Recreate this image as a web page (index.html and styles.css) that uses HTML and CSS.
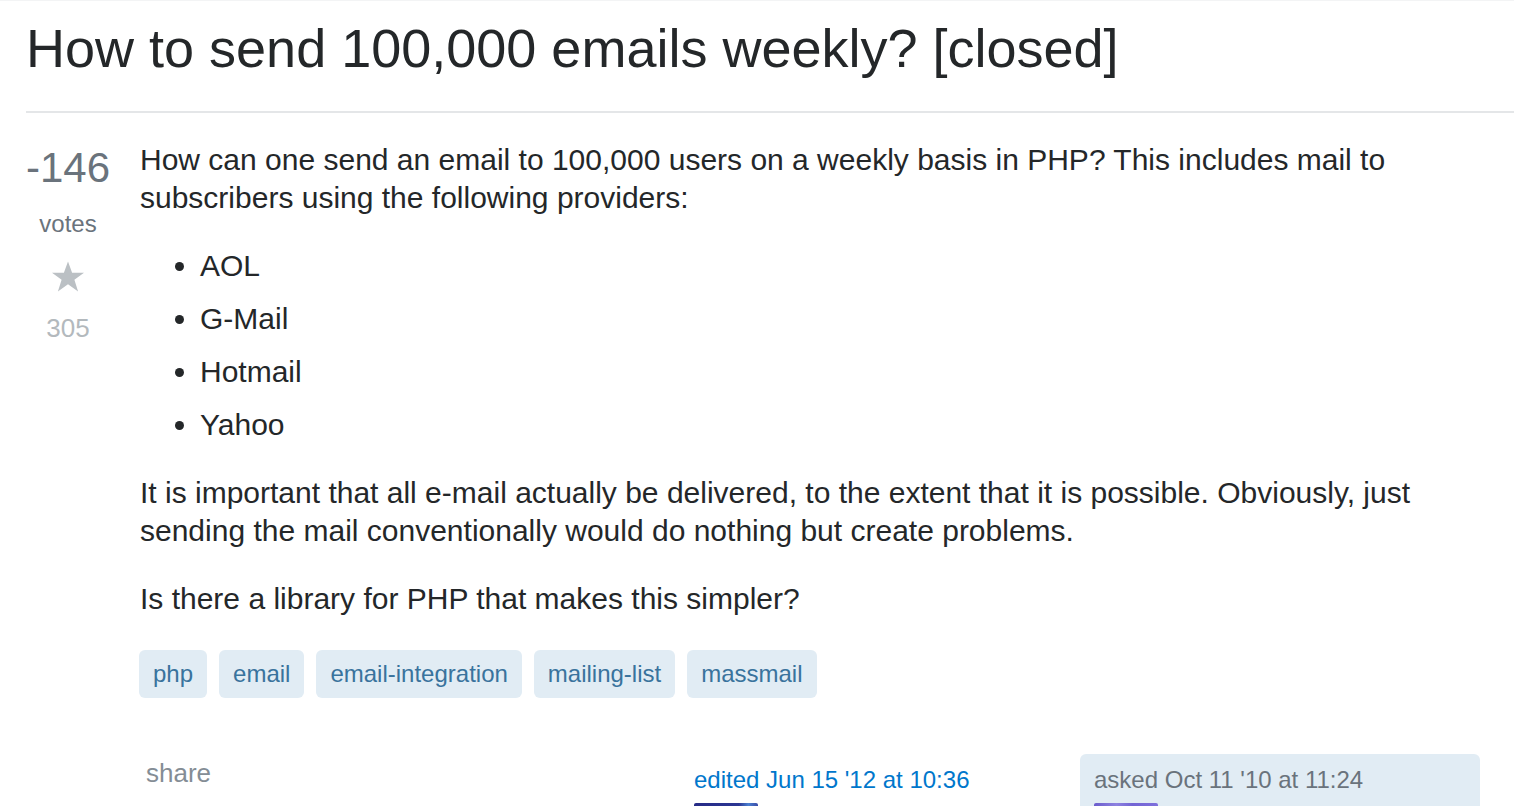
FILE: index.html
```html
<!DOCTYPE html>
<html>
<head>
<meta charset="utf-8">
<link rel="stylesheet" href="styles.css">
</head>
<body>
<div class="page">
  <div class="question-header">
    <h1 class="title">How to send 100,000 emails weekly? [closed]</h1>
  </div>
  <div class="question">
    <div class="votecell">
      <div class="vote-count">-146</div>
      <div class="vote-label">votes</div>
      <svg class="star" viewBox="0 0 34 34" width="34" height="34"><path d="M17 1.5l4.1 11.3H33l-9.6 7 3.7 11.6L17 24.3 6.9 31.4l3.7-11.6-9.6-7h11.9z" fill="#bbc0c4"/></svg>
      <div class="fav-count">305</div>
    </div>
    <div class="postcell">
      <div class="post-text">
        <p>How can one send an email to 100,000 users on a weekly basis in PHP? This includes mail to subscribers using the following providers:</p>
        <ul>
          <li>AOL</li>
          <li>G-Mail</li>
          <li>Hotmail</li>
          <li>Yahoo</li>
        </ul>
        <p>It is important that all e-mail actually be delivered, to the extent that it is possible. Obviously, just sending the mail conventionally would do nothing but create problems.</p>
        <p>Is there a library for PHP that makes this simpler?</p>
      </div>
      <div class="taglist">
        <a class="tag">php</a>
        <a class="tag">email</a>
        <a class="tag">email-integration</a>
        <a class="tag">mailing-list</a>
        <a class="tag">massmail</a>
      </div>
      <div class="post-footer">
        <div class="post-menu"><a class="share">share</a></div>
        <div class="signatures">
          <div class="sig">
            <a class="action-time edited">edited Jun 15 '12 at 10:36</a>
            <div class="avatar avatar-editor"></div>
          </div>
          <div class="sig owner">
            <div class="action-time">asked Oct 11 '10 at 11:24</div>
            <div class="avatar avatar-owner"></div>
          </div>
        </div>
      </div>
    </div>
  </div>
</div>
</body>
</html>
```

FILE: styles.css
```css
html, body {
  margin: 0;
  padding: 0;
  background: #ffffff;
}

body {
  font-family: "Liberation Sans", Arial, sans-serif;
  color: #242729;
  border-top: 1px solid #f3f4f5;
  overflow: hidden;
}

.page {
  padding-left: 26px;
}

.question-header {
  border-bottom: 2px solid #e4e6e8;
  padding-top: 11px;
  padding-bottom: 26px;
}

.title {
  margin: 0;
  font-size: 54px;
  font-weight: normal;
  line-height: 73px;
  color: #242729;
}

.question {
  display: flex;
  padding-top: 28px;
}

.votecell {
  width: 86px;
  flex: none;
  margin-left: -1px;
  display: flex;
  flex-direction: column;
  align-items: center;
  padding-top: 6px;
}

.vote-count {
  font-size: 42px;
  line-height: 42px;
  color: #6a737c;
}

.vote-label {
  font-size: 24px;
  line-height: 30px;
  color: #6a737c;
  margin-top: 20px;
}

.star {
  display: block;
  margin-top: 21px;
}

.fav-count {
  font-size: 26px;
  line-height: 30px;
  color: #b3b9bd;
  margin-top: 19px;
}

.postcell {
  flex: 1;
  padding-left: 29px;
}

.post-text {
  font-size: 30px;
  line-height: 38px;
  padding-right: 80px;
}

.post-text p {
  margin: 0 0 30px 0;
}

.post-text ul {
  margin: 0 0 30px 0;
  padding-left: 60px;
}

.post-text li {
  margin-bottom: 15px;
}

.taglist {
  display: flex;
  gap: 12px;
  margin-top: 32px;
  margin-left: -1px;
}

.tag {
  display: block;
  font-size: 24px;
  line-height: 30px;
  padding: 9px 14px;
  background: #e1ecf4;
  color: #39739d;
  border-radius: 6px;
}

.post-footer {
  display: flex;
  justify-content: space-between;
  margin-top: 56px;
  padding-right: 34px;
}

.post-menu {
  padding-top: 4px;
}

.share {
  display: block;
  font-size: 26px;
  line-height: 30px;
  padding: 0 6px;
  color: #848d95;
}

.signatures {
  display: flex;
}

.sig {
  width: 372px;
  padding: 10px 14px 0 14px;
  border-radius: 6px 6px 0 0;
}

.sig.owner {
  background: #e1ecf4;
}

.action-time {
  display: block;
  font-size: 24px;
  line-height: 31px;
  color: #6a737c;
}

.edited {
  color: #0077cc;
}

.avatar {
  width: 64px;
  height: 64px;
  margin-top: 8px;
  border-radius: 2px;
}

.avatar-editor {
  background: linear-gradient(90deg, #262b86 0%, #2b3593 70%, #4a7fd0 85%, #3a4aa6 100%);
}

.avatar-owner {
  background: linear-gradient(90deg, #6a5ccc 0%, #8d82e0 35%, #7264d4 60%, #7e70dc 100%);
}
```
